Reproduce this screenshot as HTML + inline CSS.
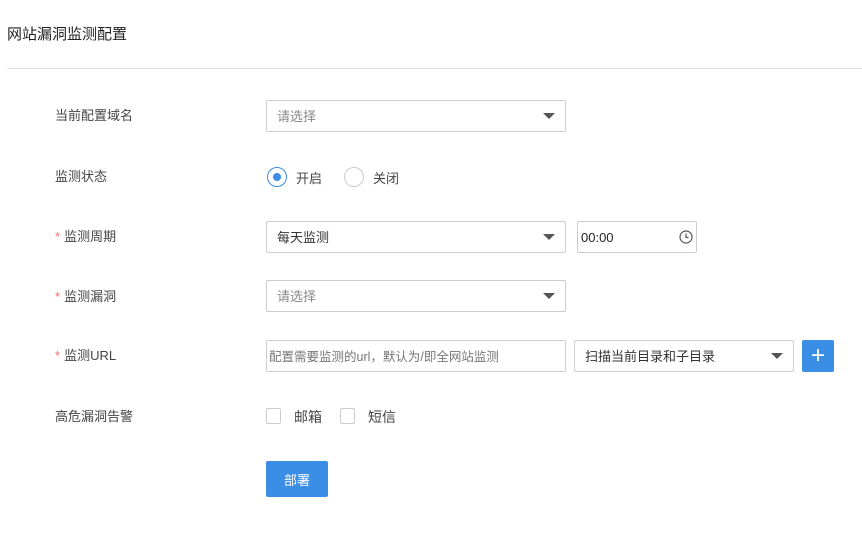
<!DOCTYPE html><html><head><meta charset="utf-8"><style>
*{box-sizing:border-box;margin:0;padding:0}
body{width:862px;height:542px;background:#fff;font-family:"Liberation Sans","Noto Sans CJK SC",sans-serif;font-size:13px;color:#333;position:relative;overflow:hidden}
.a{position:absolute}
.box{position:absolute;border:1px solid #ccc;border-radius:2px;background:#fff;height:32px;line-height:32px;padding-left:10px;color:#555}
.tri{position:absolute;right:10px;top:12px;width:0;height:0;border-left:6px solid transparent;border-right:6px solid transparent;border-top:6px solid #555}
.lab{position:absolute;left:55px;color:#444}
.star{color:#f56c6c;margin-right:4px}
.cb{position:absolute;width:15px;height:16px;border:1px solid #ccc;border-radius:2px}
</style></head><body>
<div class="a" style="left:7px;top:23px;font-size:15px;color:#222">网站漏洞监测配置</div>
<div class="a" style="left:7px;top:68px;width:855px;height:1px;background:#dde1e6"></div>

<div class="lab" style="top:105px">当前配置域名</div>
<div class="box" style="left:266px;top:100px;width:300px;color:#888">请选择<span class="tri"></span></div>

<div class="lab" style="top:166px">监测状态</div>
<div class="a" style="left:267px;top:167px;width:20px;height:20px;border:1px solid #3a8ee6;border-radius:50%"></div>
<div class="a" style="left:273px;top:173px;width:8px;height:8px;background:#3a8ee6;border-radius:50%"></div>
<div class="a" style="left:296px;top:168px;color:#444">开启</div>
<div class="a" style="left:344px;top:167px;width:20px;height:20px;border:1px solid #ccc;border-radius:50%"></div>
<div class="a" style="left:373px;top:168px;color:#444">关闭</div>

<div class="lab" style="top:226px"><span class="star">*</span>监测周期</div>
<div class="box" style="left:266px;top:221px;width:300px;color:#333">每天监测<span class="tri"></span></div>
<div class="box" style="left:577px;top:221px;width:120px;padding-left:3px;color:#222">00:00
<svg class="a" style="right:3px;top:8px" width="14" height="14" viewBox="0 0 14 14"><circle cx="7" cy="7" r="6" fill="none" stroke="#555" stroke-width="1.2"/><path d="M7 3.5V7.5H9.5" fill="none" stroke="#555" stroke-width="1.2"/></svg></div>

<div class="lab" style="top:286px"><span class="star">*</span>监测漏洞</div>
<div class="box" style="left:266px;top:280px;width:300px;color:#888">请选择<span class="tri"></span></div>

<div class="lab" style="top:345px"><span class="star">*</span>监测URL</div>
<div class="box" style="left:266px;top:340px;width:300px;padding-left:2px;color:#777;font-size:12.5px">配置需要监测的url，默认为/即全网站监测</div>
<div class="box" style="left:574px;top:340px;width:220px;color:#333">扫描当前目录和子目录<span class="tri"></span></div>
<div class="a" style="left:802px;top:340px;width:32px;height:32px;background:#3a8ee6;border-radius:2px;color:#fff;font-size:24px;line-height:32px;text-align:center">+</div>

<div class="lab" style="top:406px">高危漏洞告警</div>
<div class="cb" style="left:266px;top:408px"></div>
<div class="a" style="left:294px;top:407px;font-size:14px;color:#444">邮箱</div>
<div class="cb" style="left:340px;top:408px"></div>
<div class="a" style="left:368px;top:407px;font-size:14px;color:#444">短信</div>

<div class="a" style="left:266px;top:461px;width:62px;height:36px;background:#3a8ee6;border-radius:2px;color:#fff;text-align:center;line-height:39px">部署</div>
</body></html>
